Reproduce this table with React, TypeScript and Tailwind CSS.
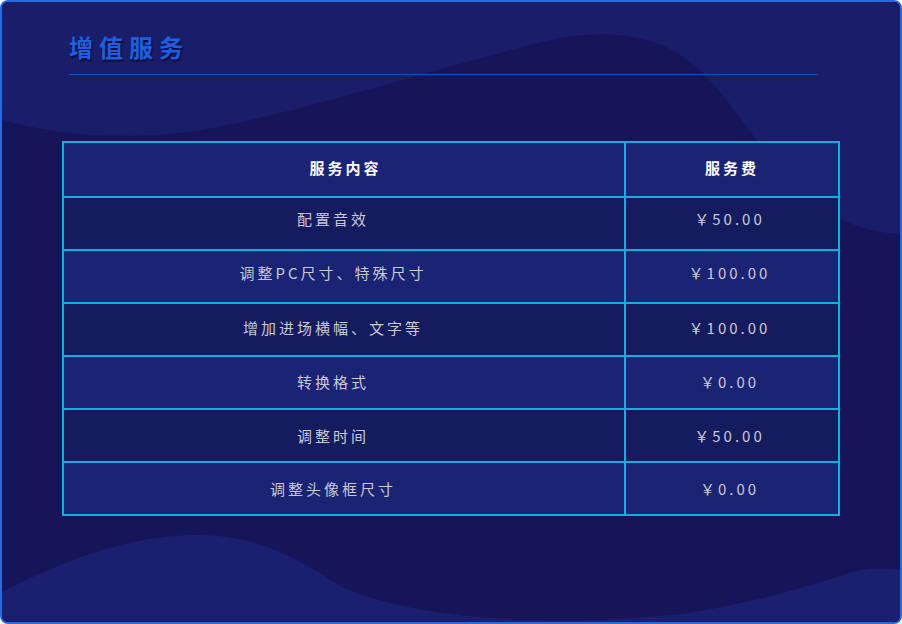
import React from "react";

const rows: [string, string, string][] = [
  ["配置音效", "￥50.00", "pb-[9px]"],
  ["调整PC尺寸、特殊尺寸", "￥100.00", "pb-[7px]"],
  ["增加进场横幅、文字等", "￥100.00", "pb-[3px]"],
  ["转换格式", "￥0.00", "pb-[1px]"],
  ["调整时间", "￥50.00", "pt-[1px]"],
  ["调整头像框尺寸", "￥0.00", "pt-[2px]"],
];

export default function App() {
  return (
    <div
      className="w-[902px] h-[624px] bg-white"
      style={{ fontFamily: '"Noto Sans CJK SC", "Noto Sans", sans-serif' }}
    >
      <div className="relative w-full h-full overflow-hidden rounded-[8px] border-2 border-[#2a6ae0] bg-[#171658]">
        <svg
          className="absolute inset-0"
          width="898"
          height="620"
          viewBox="0 0 898 620"
          preserveAspectRatio="none"
        >
          <rect x="0" y="0" width="898" height="620" fill="#17155a" />
          <path
            d="M0 0 H898 V232 C860 230 820 215 790 180 C760 150 730 100 700 70 C660 30 600 25 540 40 C420 70 300 110 200 128 C120 140 50 132 0 118 Z"
            fill="#1a1d69"
          />
          <path
            d="M0 620 V590 C60 560 120 535 190 533 C260 532 300 560 340 585 C420 620 560 625 680 612 C760 600 820 580 850 570 C870 565 885 566 898 568 V620 Z"
            fill="#1a1f70"
          />
        </svg>

        <div className="relative flex flex-col pl-[60px] pt-[28px]">
          <div className="ml-[7px] w-[749px] border-b border-[#1c4fb8] pb-[10px]">
            <h1
              className="text-[24px] leading-[34px] font-bold tracking-[6px] text-[#1e5fe0]"
              style={{ textShadow: "1px 2px 1px #0a0c3a" }}
            >
              增值服务
            </h1>
          </div>

          <div className="mt-[66px] flex w-[778px] flex-col border-2 border-[#14b0dd] text-[15px] tracking-[3px]">
            <div className="flex h-[55px] border-b-2 border-[#14b0dd] bg-[#1b2374] font-bold text-white">
              <div className="flex w-[560px] items-center justify-center pl-[3px] pb-[2px]">服务内容</div>
              <div className="flex flex-1 items-center justify-center border-l-2 border-[#14b0dd] pb-[2px]">
                服务费
              </div>
            </div>
            {rows.map(([a, b, off], i) => (
              <div
                key={i}
                className={
                  i === rows.length - 1
                    ? "flex h-[51px] bg-[#1b2374] text-[#c9c9d6]"
                    : i % 2 === 0
                    ? "flex h-[53px] border-b-2 border-[#14b0dd] bg-[#151b5f] text-[#c9c9d6]"
                    : "flex h-[53px] border-b-2 border-[#14b0dd] bg-[#1b2374] text-[#c9c9d6]"
                }
              >
                <div className={"flex w-[560px] items-center justify-center pr-[22px] " + off}>{a}</div>
                <div className={"flex flex-1 items-center justify-center border-l-2 border-[#14b0dd] pr-[5px] " + off}>
                  {b}
                </div>
              </div>
            ))}
          </div>
        </div>
      </div>
    </div>
  );
}
